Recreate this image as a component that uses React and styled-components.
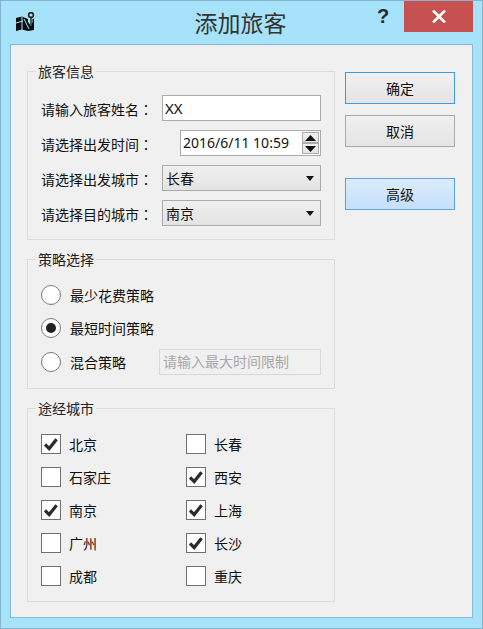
import React from "react";
import styled, { createGlobalStyle } from "styled-components";

const Global = createGlobalStyle`
  html, body { margin: 0; padding: 0; background: #a6e3fb; }
  * { box-sizing: border-box; }
`;

const FONT = `"Noto Sans", "Noto Sans CJK SC", sans-serif`;

const Win = styled.div`
  width: 483px; height: 629px; display: flex; flex-direction: column;
  background: #a6e3fb; border: 1px solid #86b4cc;
  font: 14px/20px ${FONT}; color: #111; overflow: hidden;
`;
const TitleBar = styled.div`
  height: 43px; flex: none; position: relative; display: flex; align-items: center; justify-content: center;
`;
const AppIcon = styled.svg`position: absolute; left: 14px; top: 11px;`;
const Title = styled.div`font-size: 23px; line-height: 30px; color: #333; margin-right: 2px;`;
const Help = styled.div`
  position: absolute; left: 375px; top: 2px; width: 14px; text-align: center;
  font: bold 20px/26px "Liberation Sans", sans-serif; color: #2b2b2b;
`;
const Close = styled.div`
  position: absolute; left: 403px; top: 0; width: 69px; height: 31px; background: #c75050;
  display: flex; align-items: center; justify-content: center;
`;
const Client = styled.div`
  margin: 0 9px 10px; flex: 1; min-height: 0; background: #f0f0f0; border: 1px solid #84bcd9;
  display: flex; padding: 26px 17px 0 16px; gap: 10px;
`;
const Left = styled.div`width: 308px; flex: none; display: flex; flex-direction: column; gap: 19px;`;
const Right = styled.div`width: 110px; flex: none; display: flex; flex-direction: column; padding-top: 1px;`;
const Group = styled.div`
  position: relative; border: 1px solid #dcdcdc; padding: ${p => p.$pad};
`;
const Legend = styled.div`
  position: absolute; left: 8px; top: -9px; padding: 0 2px; background: #f0f0f0; line-height: 18px; color: #222;
`;
const Stack = styled.div`display: flex; flex-direction: column; gap: ${p => p.$gap}px;`;
const Row = styled.div`display: flex; align-items: center; height: 26px; margin-top: ${p => p.$mt || 0}px;`;
const Label = styled.div`width: 121px; flex: none; white-space: nowrap; padding-top: 2px;`;
const Colon = styled.span`font-family: "Noto Sans CJK TC", sans-serif;`;
const TextBox = styled.div`
  flex: 1; height: 26px; background: #fff; border: 1px solid #ababab; padding: 0 2px;
  display: flex; align-items: center; font-size: 15px;
`;
const DateBox = styled.div`
  margin-left: 18px; width: 141px; height: 26px; background: #fff; border: 1px solid #ababab;
  display: flex; align-items: center; justify-content: space-between; padding: 0 1px 0 2px;
`;
const Spin = styled.div`display: flex; flex-direction: column; width: 17px;`;
const SpinBtn = styled.div`
  height: 11px; width: 17px; border: 1px solid #ababab;
  background: linear-gradient(#f0f0f0, #e4e4e4); display: flex; align-items: center; justify-content: center;
`;
const Combo = styled.div`
  flex: 1; height: 26px; border: 1px solid #ababab; background: linear-gradient(#f0f0f0, #e3e3e3);
  padding: 0 6px 0 3px; display: flex; align-items: center; justify-content: space-between;
`;
const ComboText = styled.span`padding-top: 2px;`;
const Radio = styled.div`
  width: 20px; height: 20px; flex: none; border-radius: 50%; border: 1px solid #7a7a7a; background: #fff;
  display: flex; align-items: center; justify-content: center;
`;
const Dot = styled.div`width: 10px; height: 10px; border-radius: 50%; background: #222;`;
const RadioText = styled.div`margin-left: 9px; white-space: nowrap; padding-top: 2px;`;
const Disabled = styled.div`
  margin-left: 33px; width: 162px; height: 26px; border: 1px solid #d9d9d9; background: #f0f0f0; color: #a8a8a8;
  display: flex; align-items: center; padding: 0 3px; white-space: nowrap;
`;
const CheckGrid = styled.div`display: grid; grid-template-columns: 145px 1fr; row-gap: 13px;`;
const CheckItem = styled.div`display: flex; align-items: center; height: 20px;`;
const Box = styled.div`
  width: 20px; height: 20px; flex: none; border: 1px solid #707070; background: #fff;
  display: flex; align-items: center; justify-content: center;
`;
const CheckText = styled.div`margin-left: 8px; padding-top: 2px;`;
const Btn = styled.div`
  height: 32px; display: flex; align-items: center; justify-content: center; padding-top: 2px;
  margin-top: ${p => p.$mt || 0}px;
  border: 1px solid ${p => p.$variant === "default" ? "#3c9aee" : p.$variant === "hot" ? "#5aa2e4" : "#ababab"};
  background: ${p => p.$variant === "hot" ? "linear-gradient(#dcecfc, #c4e0fb)" : "linear-gradient(#f0f0f0, #e4e4e4)"};
`;

const Tick = () => (
  <svg width="14" height="13" viewBox="0 0 14 13">
    <path d="M1 6.5L5.2 10.6L12.6 1.2" fill="none" stroke="#2b2b2b" strokeWidth="3.2" />
  </svg>
);
const Down = () => <svg width="8" height="5" viewBox="0 0 8 5"><path d="M0 0H8L4 5Z" fill="#111" /></svg>;
const Tri = ({ up }) => (
  <svg width="11" height="6" viewBox="0 0 11 6"><path d={up ? "M0 6H11L5.5 0Z" : "M0 0H11L5.5 6Z"} fill="#111" /></svg>
);

const cities = [["北京", true], ["长春", false], ["石家庄", false], ["西安", true], ["南京", true], ["上海", true], ["广州", false], ["长沙", true], ["成都", false], ["重庆", false]];

export default function App() {
  return (
    <Win>
      <Global />
      <TitleBar>
        <AppIcon width="20" height="20" viewBox="0 0 20 20">
          <path d="M1 6L7 4.5L13 7V10L16 14L17.5 10V7L19 6.5V18L13 19L7 17.5L1 19Z" fill="#0c0c0c" />
          <path d="M7 4.5V18M1 11L8 9M9 7L14 17" stroke="#a6e3fb" strokeWidth="1" fill="none" />
          <circle cx="16" cy="3" r="2.4" fill="none" stroke="#222" strokeWidth="1.6" />
          <path d="M16 5V13" stroke="#222" strokeWidth="1.4" />
        </AppIcon>
        <Title>添加旅客</Title>
        <Help>?</Help>
        <Close>
          <svg width="14" height="13" viewBox="0 0 14 13"><path d="M1 .5L13 12.5M13 .5L1 12.5" stroke="#fff" strokeWidth="2.6" /></svg>
        </Close>
      </TitleBar>
      <Client>
        <Left>
          <Group $pad="23px 13px 13px">
            <Legend>旅客信息</Legend>
            <Stack $gap={9}>
              <Row><Label>请输入旅客姓名<Colon>：</Colon></Label><TextBox>XX</TextBox></Row>
              <Row>
                <Label>请选择出发时间<Colon>：</Colon></Label>
                <DateBox>
                  2016/6/11 10:59
                  <Spin>
                    <SpinBtn><Tri up /></SpinBtn>
                    <SpinBtn><Tri /></SpinBtn>
                  </Spin>
                </DateBox>
              </Row>
              <Row><Label>请选择出发城市<Colon>：</Colon></Label><Combo><ComboText>长春</ComboText><Down /></Combo></Row>
              <Row><Label>请选择目的城市<Colon>：</Colon></Label><Combo><ComboText>南京</ComboText><Down /></Combo></Row>
            </Stack>
          </Group>
          <Group $pad="22px 13px 13px">
            <Legend>策略选择</Legend>
            <Stack $gap={7}>
              <Row><Radio /><RadioText>最少花费策略</RadioText></Row>
              <Row><Radio><Dot /></Radio><RadioText>最短时间策略</RadioText></Row>
              <Row $mt={1}><Radio /><RadioText>混合策略</RadioText><Disabled>请输入最大时间限制</Disabled></Row>
            </Stack>
          </Group>
          <Group $pad="25px 13px 15px">
            <Legend>途经城市</Legend>
            <CheckGrid>
              {cities.map(([name, on]) => (
                <CheckItem key={name}>
                  <Box>{on && <Tick />}</Box>
                  <CheckText>{name}</CheckText>
                </CheckItem>
              ))}
            </CheckGrid>
          </Group>
        </Left>
        <Right>
          <Btn $variant="default">确定</Btn>
          <Btn $mt={11}>取消</Btn>
          <Btn $mt={31} $variant="hot">高级</Btn>
        </Right>
      </Client>
    </Win>
  );
}
